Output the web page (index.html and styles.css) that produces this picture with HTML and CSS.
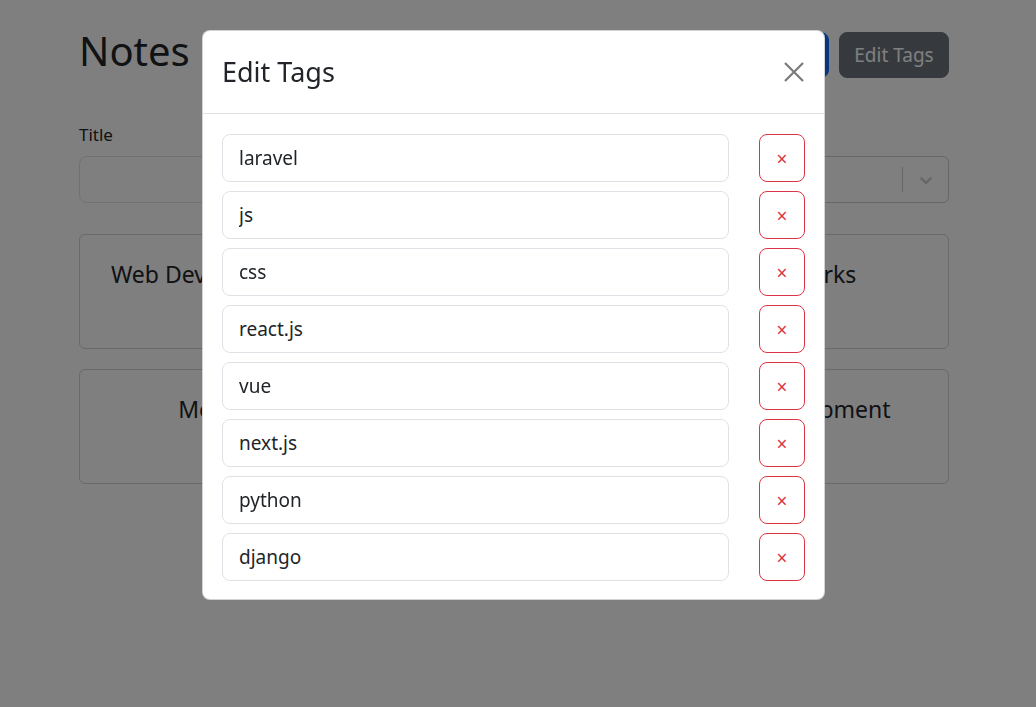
FILE: index.html
```html
<!DOCTYPE html>
<html lang="en">
<head>
<meta charset="utf-8">
<title>Notes</title>
<link rel="stylesheet" href="styles.css">
</head>
<body>
  <div class="page">
    <header class="topbar">
      <h1 class="page-title">Notes</h1>
      <div class="actions">
        <button class="btn btn-lg btn-primary" type="button">Create</button>
        <button class="btn btn-lg btn-secondary" type="button">Edit Tags</button>
      </div>
    </header>

    <form class="filters">
      <div class="field">
        <label class="form-label">Title</label>
        <input class="form-control" type="text">
      </div>
      <div class="field">
        <label class="form-label">Tags</label>
        <div class="select">
          <div class="select-value"></div>
          <span class="select-sep"></span>
          <div class="select-indicator">
            <svg viewBox="0 0 20 20" width="20" height="20"><path d="M4.516 7.548c0.436-0.446 1.043-0.481 1.576 0l3.908 3.747 3.908-3.747c0.533-0.481 1.141-0.446 1.574 0 0.436 0.445 0.408 1.197 0 1.615-0.406 0.418-4.695 4.502-4.695 4.502-0.217 0.223-0.502 0.335-0.787 0.335s-0.57-0.112-0.789-0.335c0 0-4.287-4.084-4.695-4.502s-0.436-1.17 0-1.615z"/></svg>
          </div>
        </div>
      </div>
    </form>

    <div class="cards">
      <div class="card"><h4 class="card-title">Web Development Fundamentals</h4></div>
      <div class="card"><h4 class="card-title">Frontend Frameworks</h4></div>
      <div class="card"><h4 class="card-title">Mobile Development</h4></div>
      <div class="card"><h4 class="card-title">Full Stack Web Development</h4></div>
    </div>
  </div>

  <div class="backdrop"></div>

  <div class="modal-layer">
    <div class="modal">
      <div class="modal-header">
        <h3 class="modal-title">Edit Tags</h3>
        <button class="btn-close" type="button" aria-label="Close">
          <svg viewBox="0 0 20 20" width="20" height="20"><path d="M1 1L19 19M19 1L1 19"/></svg>
        </button>
      </div>
      <div class="modal-body">
        <div class="tag-row"><input class="tag-input" type="text" value="laravel"><button class="btn-del" type="button">×</button></div>
        <div class="tag-row"><input class="tag-input" type="text" value="js"><button class="btn-del" type="button">×</button></div>
        <div class="tag-row"><input class="tag-input" type="text" value="css"><button class="btn-del" type="button">×</button></div>
        <div class="tag-row"><input class="tag-input" type="text" value="react.js"><button class="btn-del" type="button">×</button></div>
        <div class="tag-row"><input class="tag-input" type="text" value="vue"><button class="btn-del" type="button">×</button></div>
        <div class="tag-row"><input class="tag-input" type="text" value="next.js"><button class="btn-del" type="button">×</button></div>
        <div class="tag-row"><input class="tag-input" type="text" value="python"><button class="btn-del" type="button">×</button></div>
        <div class="tag-row"><input class="tag-input" type="text" value="django"><button class="btn-del" type="button">×</button></div>
      </div>
    </div>
  </div>
</body>
</html>
```

FILE: styles.css
```css
* { box-sizing: border-box; }

html, body {
  margin: 0;
  padding: 0;
  height: 100%;
  overflow: hidden;
}

body {
  background: #fff;
  color: #212529;
  font-family: "Noto Sans", "Open Sans", sans-serif;
  font-size: 16px;
  line-height: 1.5;
}

.page {
  width: 870px;
  margin-left: 79px;
  padding-top: 27px;
}

.topbar {
  display: flex;
  align-items: flex-start;
  justify-content: space-between;
  height: 51px;
}

.page-title {
  margin: 0;
  font-size: 40px;
  font-weight: 400;
  line-height: 1.2;
}

.actions {
  display: flex;
  gap: 10px;
  margin-top: 5px;
}

.btn {
  font-family: inherit;
  border: 1px solid transparent;
  cursor: pointer;
}

.btn-lg {
  height: 46px;
  padding: 0 16px;
  font-size: 19px;
  line-height: 1.5;
  border-radius: 8px;
}

.btn-primary {
  background: #0d6efd;
  border-color: #0d6efd;
  color: #fff;
  width: 160px;
}

.btn-secondary {
  background: #6c757d;
  border-color: #6c757d;
  color: #fff;
  width: 110px;
  padding: 0;
}

.filters {
  display: grid;
  grid-template-columns: 1fr 1fr;
  column-gap: 24px;
  margin-top: 45px;
}

.form-label {
  display: block;
  margin-bottom: 9px;
  font-size: 17px;
  line-height: 24px;
}

.form-control {
  display: block;
  width: 100%;
  height: 47px;
  border: 1px solid #dee2e6;
  border-radius: 8px;
  font: inherit;
  padding: 0 16px;
}

.select {
  display: flex;
  align-items: center;
  height: 47px;
  border: 1px solid #ccc;
  border-radius: 6px;
  background: #fff;
}

.select-value { flex: 1; }

.select-sep {
  width: 1px;
  height: 25px;
  background: #ccc;
}

.select-indicator {
  display: flex;
  padding: 0 12px 0 13px;
}

.select-indicator svg { fill: #ccc; }

.cards {
  display: grid;
  grid-template-columns: 1fr 1fr;
  column-gap: 24px;
  row-gap: 20px;
  margin-top: 31px;
}

.card {
  height: 115px;
  border: 1px solid rgba(0, 0, 0, 0.175);
  border-radius: 6px;
  padding: 25px 16px 0;
}

.card-title {
  margin: 0;
  font-size: 23px;
  font-weight: 400;
  line-height: 1.25;
  text-align: center;
  white-space: nowrap;
}

.backdrop {
  position: fixed;
  inset: 0;
  background: rgba(0, 0, 0, 0.5);
}

.modal-layer {
  position: fixed;
  inset: 0;
  padding: 30px 0 0 202px;
}

.modal {
  width: 623px;
  background: #fff;
  border: 1px solid rgba(0, 0, 0, 0.175);
  border-radius: 8px;
}

.modal-header {
  display: flex;
  align-items: center;
  justify-content: space-between;
  height: 83px;
  padding: 0 18px 0 19px;
  border-bottom: 1px solid #dee2e6;
}

.modal-title {
  margin: 0;
  font-size: 27px;
  font-weight: 400;
  line-height: 1.2;
}

.btn-close {
  display: flex;
  align-items: center;
  justify-content: center;
  width: 24px;
  height: 24px;
  padding: 0;
  border: 0;
  background: transparent;
  cursor: pointer;
}

.btn-close svg {
  stroke: #7a7a7a;
  stroke-width: 2.2;
  fill: none;
}

.modal-body {
  display: flex;
  flex-direction: column;
  gap: 9px;
  padding: 20px 19px 18px;
}

.tag-row {
  display: flex;
  gap: 30px;
}

.tag-input {
  flex: 1;
  min-width: 0;
  height: 48px;
  border: 1px solid #dee2e6;
  border-radius: 8px;
  padding: 0 16px;
  font-family: inherit;
  font-size: 19px;
  color: #212529;
}

.btn-del {
  width: 46px;
  height: 48px;
  flex: none;
  border: 1px solid #dc3545;
  border-radius: 8px;
  background: #fff;
  color: #dc3545;
  font-family: inherit;
  font-size: 19px;
  line-height: 1;
  padding: 3px 0 0;
  cursor: pointer;
}
```
